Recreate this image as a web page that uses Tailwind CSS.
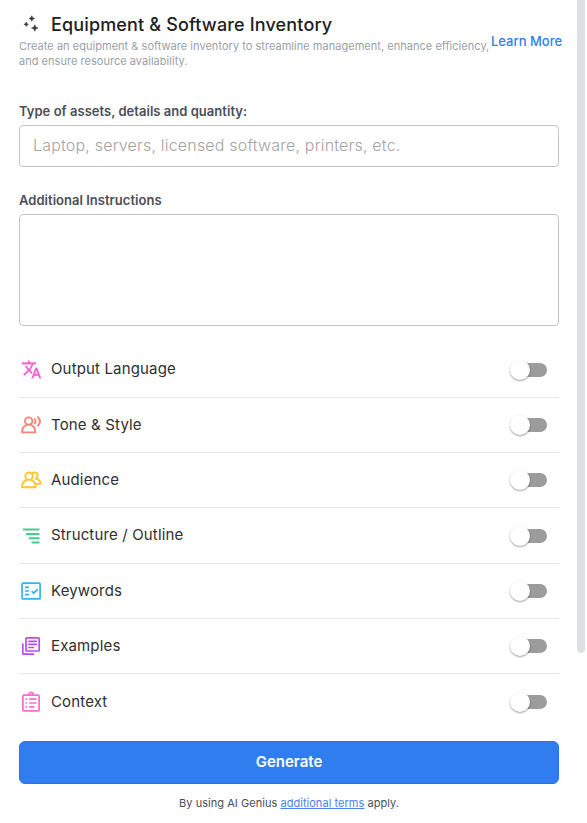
<!DOCTYPE html>
<html lang="en">
<head>
    <meta charset="UTF-8">
    <meta name="viewport" content="width=device-width, initial-scale=1.0">
    <title>Equipment &amp; Software Inventory</title>
    <script src="https://cdn.jsdelivr.net/npm/@tailwindcss/browser@4"></script>
</head>
<body class="bg-white font-['Inter',sans-serif] overflow-hidden">
    <div class="relative w-[587px] h-[823px] pl-[19px] pr-7 overflow-hidden">
        <header class="flex h-[102px] pt-[12px]">
            <div class="w-[472px] shrink-0">
                <div class="flex items-center h-6">
                    <svg class="w-6 h-6 mr-2 shrink-0" viewBox="0 0 24 24" fill="#343741" stroke="#343741" stroke-width="0.5">
                        <path d="M12.8 3.7l.9 1.900 1.900.900-1.900.900-.900 1.900-.900-1.900-1.900-.900 1.900-.900zM7.200 10l.700 1.600 1.600.700-1.600.700-.700 1.600-.700-1.600-1.600-.700 1.600-.700zM15.800 12.700l1 2.300 2.300 1-2.300 1-1 2.300-1-2.300-2.300-1 2.300-1z" />
                    </svg>
                    <h1 class="text-[18px] font-medium text-[#212121] tracking-[0.15px] whitespace-nowrap">Equipment &amp; Software Inventory</h1>
                </div>
                <p class="text-[11px] leading-[15px] mt-[3px] tracking-[0.03px] text-[#9a9fa8] whitespace-nowrap">Create an equipment &amp; software inventory to streamline management, enhance efficiency,<br>and ensure resource availability.</p>
            </div>
            <a href="#" class="mt-[21px] text-[13px] leading-4 font-medium text-[#2f7dee] whitespace-nowrap">Learn More</a>
        </header>

        <label class="block h-[23px] text-[13px] leading-[18px] tracking-[0.03px] font-semibold text-[#4b4e57]" for="assets">Type of assets, details and quantity:</label>
        <input id="assets" type="text" placeholder="Laptop, servers, licensed software, printers, etc." class="block w-[540px] h-[42px] px-[13px] pb-0.5 border border-[#c4c4c4] rounded text-[16px] font-light tracking-[0.19px] placeholder:text-[#a3a3a3]">

        <label class="block h-[23px] mt-[24px] text-[13px] leading-[18px] tracking-[0.03px] font-semibold text-[#4b4e57]" for="instructions">Additional Instructions</label>
        <textarea id="instructions" class="block w-[540px] h-[112px] border border-[#c4c4c4] rounded resize-none"></textarea>

        <div id="options" class="w-[540px] mt-[16.6px]">
            <div class="flex items-center h-[55.3px] border-b border-[#e6e6e6]">
                <svg class="w-[21px] h-[21px] ml-0.5 mr-[9px]" viewBox="0 0 24 24" fill="#f95fd0" stroke="#f95fd0" stroke-width="0.3">
                    <path d="M12.87 15.07l-2.54-2.51.03-.03c1.74-1.94 2.98-4.17 3.71-6.53H17V4h-7V2H8v2H1v1.99h11.17C11.5 7.92 10.44 9.75 9 11.35 8.07 10.32 7.3 9.19 6.69 8h-2c.73 1.63 1.73 3.17 2.98 4.56l-5.09 5.02L4 19l5-5 3.11 3.11.76-2.04zM18.5 10h-2L12 22h2l1.12-3h4.75L21 22h2l-4.5-12zm-2.62 7l1.62-4.33L19.12 17h-3.24z" />
                </svg>
                <span class="grow text-[15px] text-[#303030] tracking-[0.15px]">Output Language</span>
                <div class="switch"></div>
            </div>
            <div class="flex items-center h-[55.3px] border-b border-[#e6e6e6]">
                <svg class="w-6 h-6 mr-2" viewBox="0 0 24 24" fill="none" stroke="#ff8173" stroke-width="1.9" stroke-linecap="round">
                    <circle cx="9.7" cy="8.1" r="3.7" />
                    <path stroke-linejoin="round" d="M7.3 12.2C4.4 13.2 3.1 15.500 3.100 19.400h13.200c0-3.900-1.300-6.200-4.200-7.200M15.900 6.200q1.300 1.900 0 4M19 4.100q4 4 0 8.500" />
                </svg>
                <span class="grow text-[15px] text-[#303030] tracking-[0.15px]">Tone &amp; Style</span>
                <div class="switch"></div>
            </div>
            <div class="flex items-center h-[55.3px] border-b border-[#e6e6e6]">
                <svg class="w-6 h-6 mr-2" viewBox="0 0 24 24" fill="none" stroke="#ffc52e" stroke-width="1.9" stroke-linecap="round" stroke-linejoin="round">
                    <circle cx="10" cy="8.200" r="3.700" />
                    <path d="M7.500 12.200C4.600 13.200 3 15.500 3 19.300h13.800c0-3.800-1.600-6.100-4.500-7.100M13.500 5.300c2.400-2 5.200-.5 5.200 2.200 0 1.500-.8 2.600-2 3.200 3.400.7 5 2.300 5 5.200h-4" />
                </svg>
                <span class="grow text-[15px] text-[#303030] tracking-[0.15px]">Audience</span>
                <div class="switch"></div>
            </div>
            <div class="flex items-center h-[55.3px] border-b border-[#e6e6e6]">
                <svg class="w-6 h-6 mr-2" viewBox="0 0 24 24" fill="#3fd08f">
                    <path d="M4 4.500h16.500v2.100H4zM7 8.900h13.500V11H7zM9.800 13.200h10.700v2.100H9.800zM12.600 17.500h7.900v2.100h-7.900z" />
                </svg>
                <span class="grow text-[15px] text-[#303030] tracking-[0.15px]">Structure / Outline</span>
                <div class="switch"></div>
            </div>
            <div class="flex items-center h-[55.3px] border-b border-[#e6e6e6]">
                <svg class="w-6 h-6 mr-2" viewBox="0 0 24 24" fill="none" stroke="#35b4ea" stroke-width="1.7">
                    <rect x="3.100" y="4.100" width="18" height="15.800" rx="1" />
                    <path d="M6 8.400h4M6 12h4M6 15.600h4M12.700 12.200l2 2 4-4" />
                </svg>
                <span class="grow text-[15px] text-[#303030] tracking-[0.15px]">Keywords</span>
                <div class="switch"></div>
            </div>
            <div class="flex items-center h-[55.3px] border-b border-[#e6e6e6]">
                <svg class="w-6 h-6 mr-2" viewBox="0 0 24 24" fill="none" stroke="#b94bea" stroke-width="1.7" stroke-linecap="round" stroke-linejoin="round">
                    <rect x="7" y="3.800" width="13.200" height="13.200" rx="1" />
                    <path d="M3.800 10v9.200q0 1 1 1H14.500M10 7.300h7.300M10 10.400h7.300M10 13.500h4.500" />
                </svg>
                <span class="grow text-[15px] text-[#303030] tracking-[0.15px]">Examples</span>
                <div class="switch"></div>
            </div>
            <div class="flex items-center h-[55.3px]">
                <svg class="w-6 h-6 mr-2" viewBox="0 0 24 24" fill="none" stroke="#f96dcc" stroke-width="1.7" stroke-linejoin="round">
                    <rect x="3.900" y="5.200" width="16.200" height="15.600" rx="0.800" />
                    <path d="M9.900 5.200V4.500a2.100 2.100 0 0 1 4.200 0v.7M6.500 9.200h1.700M6.500 13h1.700M6.500 16.800h1.700M10.200 9.200H17.500M10.200 13H17.500M10.200 16.800H15.500" />
                </svg>
                <span class="grow text-[15px] text-[#303030] tracking-[0.15px]">Context</span>
                <div class="switch"></div>
            </div>
        </div>

        <button class="block w-[540px] h-[43px] mt-[11.4px] rounded-md border border-[#2376f0] bg-[#2f7dee] text-white text-[15px] font-semibold">Generate</button>
        <p class="w-[540px] mt-[11px] text-center text-[11px] leading-4 tracking-[0.04px] text-[#4b4e57]">By using AI Genius <a href="#" class="text-[#4c80ee] underline">additional terms</a> apply.</p>

        <!-- scrollbar -->
        <div class="absolute top-0 right-0.5 w-2 h-[653px] bg-[#dfe0e5] rounded-b"></div>
    </div>

    <script>
        document.querySelectorAll('.switch').forEach(el => {
            el.innerHTML = `
                <div class="relative w-[34px] h-3.5 mr-3 rounded-full bg-[#9c9c9c]">
                    <div class="absolute -left-[3px] -top-[3px] w-5 h-5 rounded-full bg-white shadow-[0_1px_2px_rgba(0,0,0,0.4)]"></div>
                </div>
            `;
        });
    </script>
</body>
</html>
